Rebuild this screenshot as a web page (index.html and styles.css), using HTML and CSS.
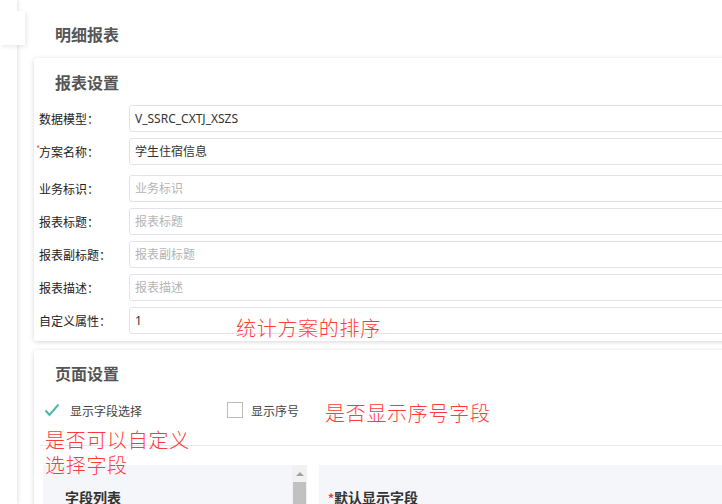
FILE: index.html
```html
<!DOCTYPE html>
<html lang="zh">
<head>
<meta charset="utf-8">
<link rel="stylesheet" href="styles.css">
</head>
<body>
<div class="app">
  <aside class="sidebar"><div class="side-tab"></div></aside>
  <main class="main">
    <h1 class="page-title">明细报表</h1>
    <section class="card card-report">
      <h2 class="card-title">报表设置</h2>
      <div class="form">
        <div class="row"><label class="lbl">数据模型：</label><div class="inp">V_SSRC_CXTJ_XSZS</div></div>
        <div class="row row-gap"><label class="lbl"><span class="star">*</span>方案名称：</label><div class="inp">学生住宿信息</div></div>
        <div class="row"><label class="lbl">业务标识：</label><div class="inp ph">业务标识</div></div>
        <div class="row"><label class="lbl">报表标题：</label><div class="inp ph">报表标题</div></div>
        <div class="row"><label class="lbl">报表副标题：</label><div class="inp ph">报表副标题</div></div>
        <div class="row"><label class="lbl">报表描述：</label><div class="inp ph">报表描述</div></div>
        <div class="row"><label class="lbl">自定义属性：</label><div class="inp">1</div></div>
      </div>
      <div class="note note-sort">统计方案的排序</div>
    </section>
    <section class="card card-page">
      <h2 class="card-title">页面设置</h2>
      <div class="checks">
        <div class="check check-on">
          <svg class="tick" width="16" height="14" viewBox="0 0 16 14"><polyline points="1.5,7.5 5.5,12 14.5,1.5" fill="none" stroke="#4fb8a6" stroke-width="2"/></svg>
          <span>显示字段选择</span>
        </div>
        <div class="check check-off">
          <span class="box"></span>
          <span>显示序号</span>
        </div>
      </div>
      <div class="divider"></div>
      <div class="panels">
        <div class="panel panel-left">
          <div class="panel-head">字段列表</div>
          <div class="scrollbar"><span class="arrow"></span><span class="thumb"></span></div>
        </div>
        <div class="panel panel-right">
          <div class="panel-head"><span class="star">*</span>默认显示字段</div>
        </div>
      </div>
      <div class="note note-seq">是否显示序号字段</div>
      <div class="note note-custom">是否可以自定义<br>选择字段</div>
    </section>
  </main>
</div>
</body>
</html>
```

FILE: styles.css
```css
html, body {
  margin: 0;
  padding: 0;
  width: 722px;
  height: 504px;
  overflow: hidden;
  background: #fff;
  font-family: "Microsoft YaHei", "Noto Sans CJK SC", "Noto Sans", sans-serif;
  color: #333;
}

.app {
  display: flex;
  height: 504px;
  position: relative;
}

.sidebar {
  width: 17px;
  flex: none;
  background: #fff;
  box-shadow: 1px 0 4px rgba(0, 0, 0, 0.12);
  position: relative;
  z-index: 2;
}

.side-tab {
  position: absolute;
  left: 0;
  top: 11px;
  width: 25px;
  height: 34px;
  background: #fff;
  box-shadow: 2px 2px 4px rgba(0, 0, 0, 0.08);
}

.main {
  flex: none;
  width: 820px;
  padding-left: 17px;
}

.page-title {
  margin: 0;
  height: 58px;
  padding: 23px 0 0 21px;
  box-sizing: border-box;
  font-size: 16px;
  line-height: 22px;
  font-weight: bold;
  color: #555;
}

.card {
  position: relative;
  background: #fff;
  box-shadow: 0 1px 5px rgba(0, 0, 0, 0.16);
  border-radius: 3px;
}

.card-title {
  margin: 0;
  padding: 13px 0 0 21px;
  height: 47px;
  box-sizing: border-box;
  font-size: 16px;
  line-height: 22px;
  font-weight: bold;
  color: #555;
}

.card-report {
  height: 283px;
}

.form {
  display: flex;
  flex-direction: column;
  gap: 6px;
}

.row {
  display: flex;
  align-items: center;
  height: 27px;
}

.row-gap {
  margin-bottom: 4px;
}

.lbl {
  width: 95px;
  flex: none;
  font-size: 12px;
  color: #222;
  padding-left: 5px;
  box-sizing: border-box;
  position: relative;
}

.lbl .star {
  position: absolute;
  left: 2px;
  top: -1px;
  color: #f05a5a;
  font-size: 9px;
}

.inp {
  flex: 1;
  height: 27px;
  box-sizing: border-box;
  border: 1px solid #e5e0ea;
  border-radius: 3px;
  padding-left: 5px;
  font-size: 12px;
  line-height: 25px;
  color: #333;
  font-family: "Microsoft YaHei", "Noto Sans", "Noto Sans CJK SC", sans-serif;
}

.inp.ph {
  color: #b4b4b4;
}

.note {
  position: absolute;
  color: #ff3b3b;
  font-size: 20px;
  letter-spacing: 0.7px;
  line-height: 25px;
  font-weight: 300;
  white-space: nowrap;
}

.note-sort {
  left: 202px;
  top: 257px;
}

.card-page {
  margin-top: 9px;
  height: 200px;
}

.card-page .card-title {
  padding-top: 12px;
}

.checks {
  display: flex;
  align-items: center;
  height: 26px;
  padding-left: 10px;
}

.check {
  display: flex;
  align-items: center;
  font-size: 12px;
  color: #444;
}

.check-on {
  width: 183px;
}

.tick {
  margin-right: 10px;
}

.box {
  width: 16px;
  height: 16px;
  border: 1px solid #bbb;
  box-sizing: border-box;
  margin-right: 8px;
  background: #fff;
}

.divider {
  margin: 22px 0 0 6px;
  border-top: 1px solid #e8e8e8;
}

.panels {
  display: flex;
  margin-top: 19px;
  padding-left: 9px;
  gap: 12px;
}

.panel {
  background: #f5f6fa;
  height: 60px;
  position: relative;
}

.panel-left {
  width: 264px;
}

.panel-right {
  flex: 1;
}

.panel-head {
  font-size: 14px;
  font-weight: bold;
  color: #333;
  padding: 22px 0 0 22px;
  line-height: 20px;
}

.panel-right .panel-head {
  padding-left: 9px;
}

.panel-right .star {
  color: #e33;
  font-size: 12px;
}

.scrollbar {
  position: absolute;
  right: 0;
  top: 0;
  width: 15px;
  height: 60px;
  background: #f1f1f1;
}

.arrow {
  position: absolute;
  left: 4px;
  top: 7px;
  width: 0;
  height: 0;
  border-left: 4px solid transparent;
  border-right: 4px solid transparent;
  border-bottom: 4px solid #a3a3a3;
}

.thumb {
  position: absolute;
  left: 1px;
  right: 1px;
  top: 17px;
  bottom: 0;
  background: #c1c1c1;
}

.note-seq {
  left: 291px;
  top: 50px;
}

.note-custom {
  left: 11px;
  top: 77px;
}
```
